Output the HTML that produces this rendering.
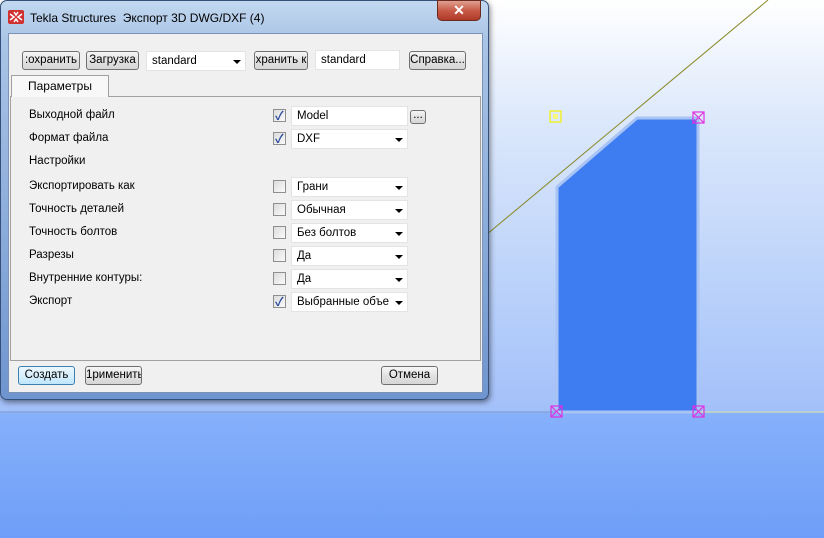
<!DOCTYPE html>
<html><head><meta charset="utf-8"><style>
*{box-sizing:border-box;margin:0;padding:0}
body{width:824px;height:538px;overflow:hidden;position:relative;font-family:"Liberation Sans","Noto Sans CJK SC",sans-serif;font-size:11.5px;color:#000;
background:linear-gradient(to bottom,#ffffff 0px,#dce8fb 120px,#b8d0fa 300px,#a3c0f9 410px,#86b0fa 414px,#6f9ef8 538px)}
.abs{position:absolute}
.win{left:0;top:0;width:489px;height:400px;border-radius:7px;border:1px solid #34507a;background:linear-gradient(to bottom,#c2d8ef,#a9c4e6 40px,#8fb0dc 200px,#6f95cf);box-shadow:1px 2px 6px rgba(0,0,0,.5)}
.title{left:30px;top:11px;font-size:12px;color:#000}
.close{left:437px;top:0;width:44px;height:21px;border-radius:0 0 5px 5px;border:1px solid #6a2a20;background:linear-gradient(#e0a090,#c85a48 50%,#b03a28);color:#fff;text-align:center;font-weight:bold;font-size:14px;line-height:19px}
.client{left:8px;top:33px;width:475px;height:360px;background:#f0f0f0;border:1px solid #7d93b5}
.btn{position:absolute;height:19px;border:1px solid #707070;border-radius:3px;background:linear-gradient(#f6f6f6,#e2e2e2 50%,#d6d6d6);text-align:center;line-height:17px;overflow:hidden;white-space:nowrap}
.fld{position:absolute;height:20px;background:#fff;border:1px solid #e4e4e4;padding-left:5px;line-height:18px;white-space:nowrap;overflow:hidden}
.arr{position:absolute;right:4px;top:8px;border-left:4px solid transparent;border-right:4px solid transparent;border-top:4px solid #000}
.cb{position:absolute;width:13px;height:13px;border:1px solid #8f8f8f;background:linear-gradient(135deg,#dcdcdc,#fafafa)}
.cb.on::after{content:"✓";position:absolute;left:1px;top:-3px;font-size:12px;color:#2f4f9f;font-weight:bold}
.lbl{position:absolute;left:29px}
</style></head><body>
<svg class="abs" style="left:0;top:0" width="824" height="538">
<line x1="480" y1="240" x2="768" y2="0" stroke="#8a8a2a" stroke-width="1"/>
<line x1="0" y1="412" x2="824" y2="412" stroke="#7e9ccc" stroke-width="1"/>
<line x1="600" y1="412" x2="824" y2="412" stroke="#e0e8a0" stroke-width="1"/>
<polygon points="557,187 637,118 698,118 698,412 557,412" fill="#3e7cf1" stroke="#a8c4f4" stroke-width="3"/>
<rect x="550" y="111" width="11" height="11" fill="none" stroke="#f0f030" stroke-width="1.5"/>
<rect x="553" y="114" width="5" height="5" fill="#f8f880"/>
<g stroke="#e030e0" fill="none" stroke-width="1.2">
<rect x="693" y="112" width="11" height="11"/><path d="M693 112l11 11M704 112l-11 11"/>
<rect x="551" y="406" width="11" height="11"/><path d="M551 406l11 11M562 406l-11 11"/>
<rect x="693" y="406" width="11" height="11"/><path d="M693 406l11 11M704 406l-11 11"/>
</g>
</svg>
<div class="abs win"></div>
<svg class="abs" style="left:8px;top:10px" width="16" height="14"><rect width="16" height="14" rx="2" fill="#d03030"/><path d="M2 4l4 3-4 3M14 4l-4 3 4 3M6 2l2 3 2-3M6 12l2-3 2 3" stroke="#fff" stroke-width="1.5" fill="none"/></svg>
<div class="abs title">Tekla Structures&nbsp; Экспорт 3D DWG/DXF (4)</div>
<div class="abs close">✕</div>
<div class="abs client"></div>
<div class="btn" style="left:22px;top:51px;width:58px">:охранить</div>
<div class="btn" style="left:86px;top:51px;width:53px">Загрузка</div>
<div class="fld" style="left:146px;top:51px;width:100px">standard<span class="arr"></span></div>
<div class="btn" style="left:254px;top:51px;width:54px">хранить к</div>
<div class="fld" style="left:315px;top:50px;width:85px">standard</div>
<div class="btn" style="left:409px;top:51px;width:57px">Справка...</div>
<div class="abs" style="left:10px;top:96px;width:471px;height:265px;border:1px solid #a0a0a0;background:#f0f0f0"></div>
<div class="abs" style="left:11px;top:75px;width:98px;height:22px;border:1px solid #a0a0a0;border-bottom:none;background:#f8f8f8;padding:3px 0 0 16px;font-size:12px">Параметры</div>
<div class="lbl" style="top:109px">Выходной файл</div>
<div class="lbl" style="top:132px">Формат файла</div>
<div class="lbl" style="top:155px">Настройки</div>
<div class="lbl" style="top:180px">Экспортировать как</div>
<div class="lbl" style="top:203px">Точность деталей</div>
<div class="lbl" style="top:226px">Точность болтов</div>
<div class="lbl" style="top:249px">Разрезы</div>
<div class="lbl" style="top:272px">Внутренние контуры:</div>
<div class="lbl" style="top:295px">Экспорт</div>
<div class="cb on" style="left:273px;top:109px"></div>
<div class="fld" style="left:291px;top:106px;width:117px">Model</div>
<div class="btn" style="left:410px;top:110px;width:16px;height:14px;line-height:8px">...</div>
<div class="cb on" style="left:273px;top:132px"></div>
<div class="fld" style="left:291px;top:129px;width:117px">DXF<span class="arr"></span></div>
<div class="cb" style="left:273px;top:180px"></div>
<div class="fld" style="left:291px;top:177px;width:117px">Грани<span class="arr"></span></div>
<div class="cb" style="left:273px;top:203px"></div>
<div class="fld" style="left:291px;top:200px;width:117px">Обычная<span class="arr"></span></div>
<div class="cb" style="left:273px;top:226px"></div>
<div class="fld" style="left:291px;top:223px;width:117px">Без болтов<span class="arr"></span></div>
<div class="cb" style="left:273px;top:249px"></div>
<div class="fld" style="left:291px;top:246px;width:117px">Да<span class="arr"></span></div>
<div class="cb" style="left:273px;top:272px"></div>
<div class="fld" style="left:291px;top:269px;width:117px">Да<span class="arr"></span></div>
<div class="cb on" style="left:273px;top:295px"></div>
<div class="fld" style="left:291px;top:292px;width:117px">Выбранные объе<span class="arr"></span></div>
<div class="btn" style="left:18px;top:366px;width:57px;border-color:#3c7fb1;background:linear-gradient(#eaf6fd,#d9f0fc 50%,#bee6fd)">Создать</div>
<div class="btn" style="left:85px;top:366px;width:57px">1рименить</div>
<div class="btn" style="left:381px;top:366px;width:57px">Отмена</div>
</body></html>
